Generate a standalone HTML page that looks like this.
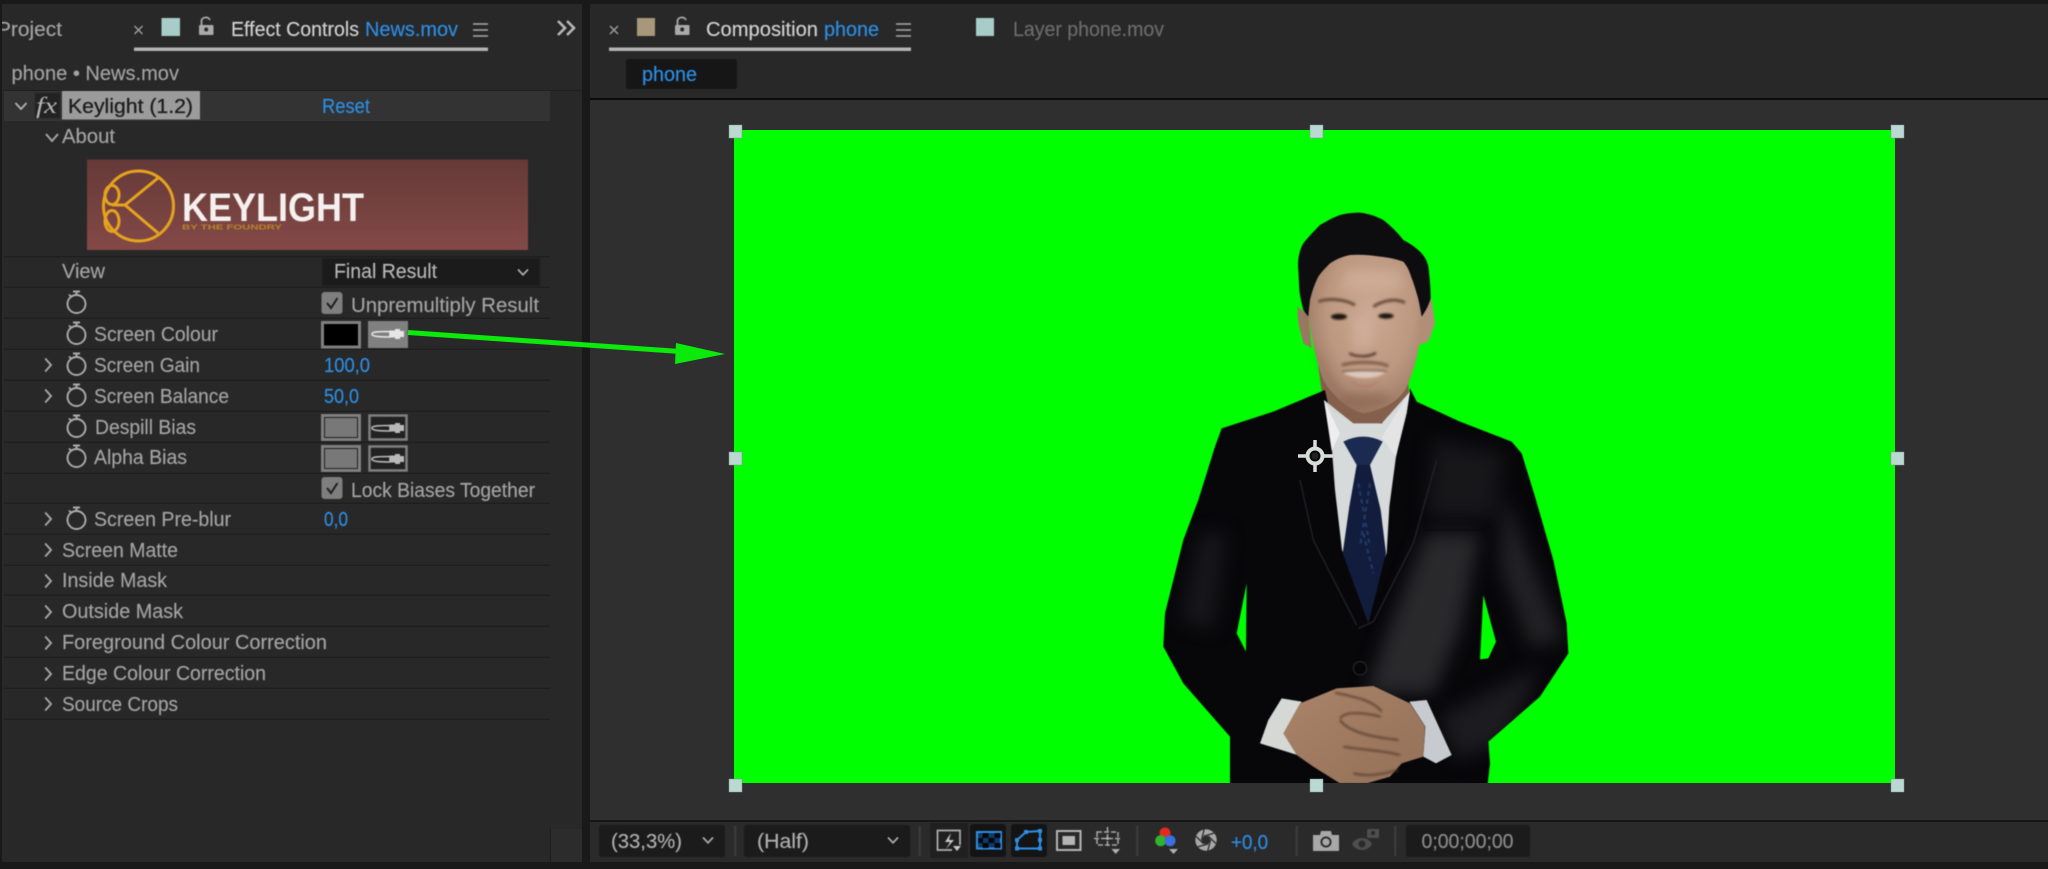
<!DOCTYPE html>
<html lang="en"><head><meta charset="utf-8"><title>Keylight - After Effects</title>
<style>
html,body{margin:0;padding:0;background:#191919;overflow:hidden}
svg{display:block;position:absolute;left:0;top:0}
text{font-family:"Liberation Sans",sans-serif;font-size:20px;fill:#a4a4a4;stroke:#a4a4a4;stroke-width:.15px}
.b{fill:#2d8fe6;stroke:#2d8fe6}.w{fill:#d2d2d2;stroke:#d2d2d2}
</style></head><body>
<svg width="2048" height="869" viewBox="0 0 2048 869" xmlns="http://www.w3.org/2000/svg">
<defs>
<filter id="s" color-interpolation-filters="sRGB" filterUnits="userSpaceOnUse" x="0" y="0" width="2048" height="869"><feGaussianBlur stdDeviation="0.4"/></filter>
<filter id="p" color-interpolation-filters="sRGB" filterUnits="userSpaceOnUse" x="1100" y="180" width="520" height="620"><feGaussianBlur stdDeviation="0.5"/></filter>
<filter id="p3" color-interpolation-filters="sRGB" x="-40%" y="-40%" width="180%" height="180%"><feGaussianBlur stdDeviation="26"/></filter>
<filter id="p1" color-interpolation-filters="sRGB" x="-30%" y="-30%" width="160%" height="160%"><feGaussianBlur stdDeviation="3"/></filter>
<filter id="p2" color-interpolation-filters="sRGB" x="-30%" y="-30%" width="160%" height="160%"><feGaussianBlur stdDeviation="14"/></filter>
<linearGradient id="logo" x1="0" y1="0" x2="0" y2="1"><stop offset="0" stop-color="#653a38"/><stop offset="1" stop-color="#844947"/></linearGradient>
<radialGradient id="face" cx=".55" cy=".42" r=".62"><stop offset="0" stop-color="#cba993"/><stop offset=".6" stop-color="#bd9880"/><stop offset="1" stop-color="#9a7763"/></radialGradient>
<linearGradient id="hand" x1="0" y1="0" x2="1" y2="1"><stop offset="0" stop-color="#ab8469"/><stop offset="1" stop-color="#937058"/></linearGradient>
<g id="sw" fill="none" stroke="#adadad" stroke-width="1.9"><circle cx="0" cy="1" r="9"/><path d="M-3.5,-11.5H3.5M0,-11.5V-8M-7.5,-8.5L-5.5,-6.5"/></g>
<path id="cr" d="M-2.8,-6.5L3,0L-2.8,6.5" fill="none" stroke="#a8a8a8" stroke-width="1.9"/>
<g id="dr"><path d="M1,5C1,3 5,2.5 19,2.5V8C5,8 1,7 1,5Z" fill="none" stroke="#e6e6e6" stroke-width="1.6"/><path d="M19,1.5H24V0H29V2H33V8H29V10H24V8.5H19Z" fill="#e6e6e6"/></g>
<g id="dr2"><path d="M1,5C1,3 5,2.5 19,2.5V8C5,8 1,7 1,5Z" fill="none" stroke="#b8b8b8" stroke-width="1.6"/><path d="M19,1.5H24V0H29V2H33V8H29V10H24V8.5H19Z" fill="#b8b8b8"/></g>
<g id="lk" fill="#a9a9a9"><rect x="0" y="8" width="14.5" height="10" rx="1"/><path d="M2.5,8V4C2.5,0 9.5,-1 11,3" fill="none" stroke="#a9a9a9" stroke-width="1.8"/><circle cx="7.2" cy="12.5" r="2" fill="#282828"/></g>
<g id="mn" stroke="#a9a9a9" stroke-width="1.6"><path d="M0,0H15M0,6H15M0,12H15"/></g>
<path id="dn" d="M-5,-2.5L0,2.8L5,-2.5" fill="none" stroke="#b0b0b0" stroke-width="1.7"/>
<clipPath id="jc"><path d="M555,570L400,635L245,685L225,740L175,900L130,1020L75,1240L70,1340L130,1450L270,1610V1750H1042L1050,1690L1045,1625L1200,1490L1285,1360L1280,1270L1240,1080L1185,890L1145,760L1115,725L960,665L830,605L810,565L800,640L640,700L570,640Z"/></clipPath>
</defs>

<rect width="2048" height="869" fill="#191919"/>
<!-- left panel -->
<rect x="2" y="4" width="580" height="858" fill="#282828"/>
<rect x="550" y="829" width="32" height="33" fill="#2c2c2c"/><rect x="550" y="829" width="1" height="33" fill="#1c1c1c"/>
<!-- right panel -->
<rect x="590" y="4" width="1458" height="858" fill="#282828"/>
<rect x="590" y="98" width="1458" height="2.5" fill="#0b0b0b"/>
<rect x="590" y="100" width="1458" height="720" fill="#2f2f2f"/>
<rect x="590" y="820" width="1458" height="2" fill="#171717"/>
<rect x="590" y="822" width="1458" height="40" fill="#2a2a2a"/>

<!-- rows -->
<rect x="4" y="90" width="578" height="1" fill="#202020"/>
<rect x="4" y="91" width="546" height="30" fill="#333333"/>
<g fill="#1f1f1f">
<rect x="4" y="256" width="546" height="1.5"/><rect x="4" y="286.5" width="546" height="1.5"/><rect x="4" y="317.5" width="546" height="1.5"/><rect x="4" y="348.5" width="546" height="1.5"/><rect x="4" y="379.5" width="546" height="1.5"/><rect x="4" y="410.5" width="546" height="1.5"/><rect x="4" y="441.5" width="546" height="1.5"/><rect x="4" y="472.5" width="546" height="1.5"/><rect x="4" y="502.5" width="546" height="1.5"/><rect x="4" y="533.5" width="546" height="1.5"/><rect x="4" y="564.5" width="546" height="1.5"/><rect x="4" y="594.5" width="546" height="1.5"/><rect x="4" y="625.5" width="546" height="1.5"/><rect x="4" y="656.5" width="546" height="1.5"/><rect x="4" y="687.5" width="546" height="1.5"/><rect x="4" y="718.5" width="546" height="1.5"/>
</g>

<g filter="url(#s)">
<!-- left tab -->
<text x="-3" y="36" textLength="65" lengthAdjust="spacingAndGlyphs">Project</text>
<path d="M134.500,26L142.500,34M142.500,26L134.500,34" stroke="#a0a0a0" stroke-width="1.4"/>
<rect x="161.500" y="18" width="18.500" height="18" fill="#a8ccc8"/>
<use href="#lk" x="199" y="17"/>
<text class="w" x="231" y="36" textLength="128" lengthAdjust="spacingAndGlyphs">Effect Controls</text>
<text class="b" x="365" y="36" textLength="93" lengthAdjust="spacingAndGlyphs">News.mov</text>
<use href="#mn" x="473" y="24"/>
<rect x="134" y="47.500" width="354" height="3.500" fill="#b4b4b4"/>
<path d="M558,21L565,28L558,35M567,21L574,28L567,35" fill="none" stroke="#b8b8b8" stroke-width="2.6"/>

<text x="11.500" y="80" textLength="167.500" lengthAdjust="spacingAndGlyphs">phone • News.mov</text>

<path d="M15.500,103L21,109L26.500,103" fill="none" stroke="#b0b0b0" stroke-width="1.9"/>
<rect x="35" y="93" width="25" height="25" fill="#222"/>
<text x="36" y="113" textLength="21" lengthAdjust="spacingAndGlyphs" style="font-family:'Liberation Serif',serif;font-style:italic;font-size:23px;fill:#b5b5b5;stroke:none">fx</text>
<rect x="62" y="91" width="138" height="28.500" fill="#9b9b9b"/>
<text x="68" y="113" textLength="125" lengthAdjust="spacingAndGlyphs" style="fill:#1c1c1c;stroke:#1c1c1c;stroke-width:.3px">Keylight (1.2)</text>
<text class="b" x="322" y="113" textLength="48" lengthAdjust="spacingAndGlyphs">Reset</text>

<path d="M46,134L52,141L58,134" fill="none" stroke="#a8a8a8" stroke-width="1.9"/>
<text x="62" y="143" textLength="53" lengthAdjust="spacingAndGlyphs">About</text>

<!-- logo -->
<rect x="87" y="159.500" width="441" height="90.500" fill="url(#logo)"/>
<g fill="none" stroke="#e5a41e" stroke-width="3">
<circle cx="138.500" cy="206" r="35"/>
<path d="M158,178L125,205L158,233M112,205H125"/>
<ellipse cx="112" cy="195" rx="7" ry="9.500"/>
<ellipse cx="112" cy="221" rx="7" ry="10.500"/>
</g>
<text x="182" y="221" textLength="182" lengthAdjust="spacingAndGlyphs" style="font-size:40px;font-weight:bold;fill:#f4f0ee;stroke:none">KEYLIGHT</text>
<text x="182" y="229.500" textLength="100" lengthAdjust="spacingAndGlyphs" style="font-size:7.500px;font-weight:bold;fill:#b8832a;stroke:none">BY THE FOUNDRY</text>

<!-- labels -->
<text x="62" y="278" textLength="43" lengthAdjust="spacingAndGlyphs">View</text>
<text x="94" y="341" textLength="124" lengthAdjust="spacingAndGlyphs">Screen Colour</text>
<text x="94" y="372" textLength="106" lengthAdjust="spacingAndGlyphs">Screen Gain</text>
<text x="94" y="403" textLength="135" lengthAdjust="spacingAndGlyphs">Screen Balance</text>
<text x="95" y="434" textLength="101" lengthAdjust="spacingAndGlyphs">Despill Bias</text>
<text x="94" y="464" textLength="93" lengthAdjust="spacingAndGlyphs">Alpha Bias</text>
<text x="94" y="526" textLength="137" lengthAdjust="spacingAndGlyphs">Screen Pre-blur</text>
<text x="62" y="557" textLength="116" lengthAdjust="spacingAndGlyphs">Screen Matte</text>
<text x="62" y="587" textLength="105" lengthAdjust="spacingAndGlyphs">Inside Mask</text>
<text x="62" y="618" textLength="121" lengthAdjust="spacingAndGlyphs">Outside Mask</text>
<text x="62" y="649" textLength="265" lengthAdjust="spacingAndGlyphs">Foreground Colour Correction</text>
<text x="62" y="680" textLength="204" lengthAdjust="spacingAndGlyphs">Edge Colour Correction</text>
<text x="62" y="711" textLength="116" lengthAdjust="spacingAndGlyphs">Source Crops</text>

<use href="#sw" x="76.500" y="303"/><use href="#sw" x="76.500" y="334"/><use href="#sw" x="76.500" y="365"/><use href="#sw" x="76.500" y="396"/><use href="#sw" x="76.500" y="427"/><use href="#sw" x="76.500" y="457"/><use href="#sw" x="76.500" y="519"/>
<use href="#cr" x="48" y="365"/><use href="#cr" x="48" y="396"/><use href="#cr" x="48" y="519"/><use href="#cr" x="48" y="550"/><use href="#cr" x="48" y="581"/><use href="#cr" x="48" y="612"/><use href="#cr" x="48" y="643"/><use href="#cr" x="48" y="674"/><use href="#cr" x="48" y="704"/>

<!-- right col -->
<rect x="322" y="258" width="218" height="28" fill="#1b1b1b" stroke="#242424"/>
<text x="334" y="278" textLength="103" lengthAdjust="spacingAndGlyphs" style="fill:#b8b8b8;stroke:#b8b8b8">Final Result</text>
<use href="#dn" x="523" y="272"/>

<rect x="321.500" y="292" width="21" height="22" rx="3" fill="#7e7e7e"/>
<path d="M327,303L331,308L337.500,298" fill="none" stroke="#1e1e1e" stroke-width="2"/>
<text x="351" y="312" textLength="188" lengthAdjust="spacingAndGlyphs">Unpremultiply Result</text>
<rect x="322.500" y="322.500" width="37" height="24.500" fill="#000" stroke="#808080" stroke-width="3"/>
<rect x="368" y="321" width="40" height="27" fill="#808080"/>
<use href="#dr" x="371" y="329"/>
<text class="b" x="324" y="372" textLength="46" lengthAdjust="spacingAndGlyphs">100,0</text>
<text class="b" x="324" y="403" textLength="35" lengthAdjust="spacingAndGlyphs">50,0</text>

<rect x="322.500" y="415.500" width="37" height="24" fill="#787878" stroke="#808080" stroke-width="3"/><rect x="324.500" y="417.500" width="33" height="20" fill="none" stroke="#222" stroke-width="1"/>
<rect x="369.500" y="415.500" width="37" height="24" fill="#222" stroke="#808080" stroke-width="2.500"/><use href="#dr2" x="371" y="423"/>
<rect x="322.500" y="446.500" width="37" height="24" fill="#787878" stroke="#808080" stroke-width="3"/><rect x="324.500" y="448.500" width="33" height="20" fill="none" stroke="#222" stroke-width="1"/>
<rect x="369.500" y="446.500" width="37" height="24" fill="#222" stroke="#808080" stroke-width="2.500"/><use href="#dr2" x="371" y="454"/>

<rect x="321.500" y="477" width="21" height="22" rx="3" fill="#7e7e7e"/>
<path d="M327,488L331,493L337.500,483" fill="none" stroke="#1e1e1e" stroke-width="2"/>
<text x="351" y="497" textLength="184" lengthAdjust="spacingAndGlyphs">Lock Biases Together</text>
<text class="b" x="324" y="526" textLength="24" lengthAdjust="spacingAndGlyphs">0,0</text>

<!-- right tabs -->
<path d="M610,26L618,34M618,26L610,34" stroke="#a0a0a0" stroke-width="1.4"/>
<rect x="637" y="18" width="18" height="18" fill="#a8977a"/>
<use href="#lk" x="675" y="17"/>
<text class="w" x="706" y="36" textLength="112" lengthAdjust="spacingAndGlyphs">Composition</text>
<text class="b" x="824" y="36" textLength="55" lengthAdjust="spacingAndGlyphs">phone</text>
<use href="#mn" x="896" y="24"/>
<rect x="609" y="47.500" width="302" height="3.500" fill="#b4b4b4"/>
<rect x="976" y="18" width="18" height="18" fill="#a8ccc8"/>
<text x="1013" y="36" textLength="151" lengthAdjust="spacingAndGlyphs" style="fill:#6c6c6c;stroke:#6c6c6c">Layer phone.mov</text>
<rect x="626" y="59" width="111" height="30" rx="3" fill="#161616"/>
<text class="b" x="642" y="81" textLength="55" lengthAdjust="spacingAndGlyphs">phone</text>

<!-- toolbar -->
<rect x="599" y="825" width="126" height="32" rx="3" fill="#1b1b1b"/>
<text x="611" y="848" textLength="71" lengthAdjust="spacingAndGlyphs" style="fill:#b0b0b0;stroke:#b0b0b0">(33,3%)</text>
<use href="#dn" x="708" y="840"/>
<rect x="744" y="825" width="166" height="32" rx="3" fill="#1b1b1b"/>
<text x="757" y="848" textLength="52" lengthAdjust="spacingAndGlyphs" style="fill:#b0b0b0;stroke:#b0b0b0">(Half)</text>
<use href="#dn" x="893" y="840"/>
<g fill="#3a3a3a"><rect x="734" y="826" width="2.500" height="30"/><rect x="918.500" y="826" width="2.500" height="30"/><rect x="1136" y="826" width="2.500" height="30"/><rect x="1295.500" y="826" width="2.500" height="30"/><rect x="1394" y="826" width="2.500" height="30"/></g>
<rect x="930" y="823" width="38" height="35" fill="#202020"/>
<path d="M952,850H937.500V830.500H960V845" fill="none" stroke="#b0b0b0" stroke-width="1.700"/>
<path d="M951,833L945,842H950L946,849L954,840H949Z" fill="#c8c8c8"/><path d="M953,846H961L957,851Z" fill="#c8c8c8"/>
<rect x="970" y="824" width="36" height="33" rx="3" fill="#141414"/>
<rect x="977" y="832" width="24" height="16.500" fill="#0f3a6a" stroke="#2d8fe6" stroke-width="2"/>
<g fill="#07070a"><rect x="982.500" y="833" width="6" height="5"/><rect x="994.500" y="833" width="6" height="5"/><rect x="978" y="838" width="5" height="5"/><rect x="988.500" y="838" width="6" height="5"/><rect x="982.500" y="843" width="6" height="5"/><rect x="994.500" y="843" width="6" height="5"/></g>
<rect x="1011" y="824" width="36" height="33" rx="3" fill="#141414"/>
<path d="M1017,848.500V840L1026,832L1040,831V848.500Z" fill="none" stroke="#2d8fe6" stroke-width="2"/>
<g fill="#2d8fe6"><rect x="1015" y="846.500" width="4" height="4"/><rect x="1038" y="846.500" width="4" height="4"/><rect x="1038" y="829" width="4" height="4"/><rect x="1024" y="830" width="4" height="4"/><rect x="1015" y="838" width="4" height="4"/><rect x="1038" y="838" width="4" height="4"/></g>
<rect x="1057" y="831" width="23.500" height="19" fill="none" stroke="#b5b5b5" stroke-width="2"/><rect x="1062.500" y="836" width="12.500" height="9" fill="#b5b5b5"/>
<path d="M1097,832H1118V845H1097ZM1107.500,827V847M1094,838.500H1121" fill="none" stroke="#a8a8a8" stroke-width="1.500" stroke-dasharray="5 2"/>
<circle cx="1107.500" cy="838.500" r="1.500" fill="#b5b5b5"/>
<path d="M1111.500,849H1120L1115.700,854Z" fill="#b0b0b0"/>
<circle cx="1165" cy="833" r="5.500" fill="#e42a1e"/><circle cx="1160.700" cy="840.700" r="5.500" fill="#2fb52a"/><circle cx="1170" cy="840.700" r="5.500" fill="#3b6fe0"/>
<path d="M1169,849H1178L1173.500,854Z" fill="#b0b0b0"/>
<g transform="translate(1206,840)">
<circle r="10.700" fill="#a8a8a8"/>
<path d="M4.500,0L1.860,10.500M2.250,3.900L-8.200,6.900M-2.250,3.900L-10.050,-3.660M-4.500,0L-1.860,-10.500M-2.250,-3.900L8.200,-6.900M2.250,-3.900L10.050,3.660" stroke="#2a2a2a" stroke-width="1.300" fill="none"/>
<path d="M4.500,0L2.250,3.900L-2.250,3.900L-4.500,0L-2.250,-3.900L2.250,-3.900Z" fill="#2a2a2a"/>
</g>
<text class="b" x="1231" y="849" textLength="37" lengthAdjust="spacingAndGlyphs">+0,0</text>
<path d="M1313,835H1320L1321,831H1331L1332,835H1339V851H1313Z" fill="#a8a8a8"/>
<circle cx="1326" cy="842" r="4.600" fill="none" stroke="#2a2a2a" stroke-width="1.900"/>
<rect x="1367" y="829" width="12" height="9" rx="1" fill="#4e4e4e"/><circle cx="1373" cy="833" r="2" fill="#2a2a2a"/>
<path d="M1352,844C1356,836 1368,836 1372,844C1368,852 1356,852 1352,844Z" fill="#4e4e4e"/><circle cx="1362" cy="844" r="3.500" fill="#2a2a2a"/>
<rect x="1406" y="825" width="124" height="32" rx="3" fill="#1b1b1b"/>
<text x="1421.500" y="848" textLength="92" lengthAdjust="spacingAndGlyphs" style="fill:#8c8c8c;stroke:#8c8c8c">0;00;00;00</text>
</g>
<rect x="0" y="4" width="2" height="858" fill="#191919"/>

<!-- composition -->
<rect x="734" y="130" width="1161" height="653" fill="#00ff00"/>
<clipPath id="cmp"><rect x="734" y="130" width="1161" height="653"/></clipPath>
<g clip-path="url(#cmp)">
<g filter="url(#p)">
<g transform="translate(1140,200) scale(.33333)">
<!-- neck -->
<path d="M535,500L550,610L640,690H725L808,590L800,500Z" fill="#84604c"/>
<!-- jacket -->
<path d="M555,570L400,635L245,685L225,740L175,900L130,1020L75,1240L70,1340L130,1450L270,1610V1760H1042L1050,1690L1045,1625L1200,1490L1285,1360L1280,1270L1240,1080L1185,890L1145,760L1115,725L960,665L830,605L810,565L800,640L640,700L570,640Z" fill="#07070a"/>
<!-- sheen -->
<g clip-path="url(#jc)">
<g filter="url(#p3)">
<path d="M740,1300L860,1000L1020,1000L960,1290L880,1480L680,1480Z" fill="#29292c"/>
<path d="M1090,880L1180,1100L1270,1320L1170,1340L1080,1100Z" fill="#222225"/>
<path d="M180,1000L120,1260L220,1290L260,1000Z" fill="#17171a"/>
<path d="M900,1550L1200,1400L1100,1620L950,1680Z" fill="#1c1c20"/>
<path d="M880,720L1090,760L1060,950L860,950Z" fill="#17171a"/>
</g>
</g>
<!-- armhole greens -->
<path d="M320,1150L290,1300L318,1355Z" fill="#00ff00"/>
<path d="M1030,1185L1068,1325L1045,1375L1020,1378Z" fill="#00ff00"/>
<!-- shirt -->
<path d="M552,600L640,670L725,670L810,575L800,640L768,770L748,920L740,1060L675,1200L606,1050L585,870L576,750Z" fill="#d6dada"/>
<path d="M552,600L600,700L575,752Z" fill="#eeeeee"/>
<path d="M810,575L725,712L768,770Z" fill="#e4e4e4"/>
<!-- tie -->
<path d="M610,725C650,705 690,705 728,725L690,795H650Z" fill="#1a2a50"/>
<path d="M650,795H690L722,930L738,1060L685,1270L608,1060L628,920Z" fill="#121c3c"/>
<path d="M655,850L690,1040M690,850L660,1040M670,1000L700,1120" stroke="#2b4783" stroke-width="7" fill="none" stroke-dasharray="14 10" opacity=".6"/>
<!-- lapel lines -->
<path d="M480,840L520,1020L650,1275M890,780L820,1030L700,1265L655,1285" fill="none" stroke="#232327" stroke-width="4"/>
<path d="M850,990H1030" stroke="#0a0a0c" stroke-width="4"/>
<circle cx="660" cy="1405" r="20" fill="#060607" stroke="#2a2a2c" stroke-width="3"/>
<!-- cuffs -->
<path d="M425,1495L485,1505L432,1600L472,1665L360,1630L385,1560Z" fill="#d5d8d4"/>
<path d="M808,1505L860,1500L935,1665L888,1690L850,1670L856,1580Z" fill="#c7cbd0"/>
<!-- hands -->
<path d="M430,1600L480,1510L590,1465L700,1458L810,1510L855,1580L850,1670L785,1690L750,1730L680,1750H600L520,1700L470,1665Z" fill="url(#hand)"/>
<g fill="none" stroke="#553829" stroke-width="5" filter="url(#p1)">
<path d="M585,1478C640,1490 700,1500 725,1535M600,1555C620,1530 680,1540 722,1550M600,1560C620,1590 680,1610 775,1620M610,1640C670,1650 720,1650 780,1665M640,1720C680,1730 720,1725 775,1710"/>
</g>
<!-- ears -->
<path d="M472,320L505,345L515,445L490,430L475,370Z" fill="#9a7762"/>
<path d="M875,295L885,370L865,425L835,435L840,345Z" fill="#b08e78"/>
<!-- face -->
<path d="M505,345C480,200 570,110 680,110C800,110 865,260 845,350C845,420 830,490 805,550C790,590 750,625 670,640C620,625 580,590 550,540C530,490 515,420 505,345Z" fill="url(#face)"/>
<!-- hair -->
<path d="M475,210C472,180 478,150 490,130C510,105 535,80 540,75C565,60 585,50 600,45C620,40 640,38 660,38C690,42 710,50 730,60C755,80 775,100 790,120C810,130 830,145 840,155C855,170 862,185 865,200C870,240 872,270 872,295C865,320 855,335 845,350C840,320 835,295 830,280C822,250 815,235 810,220C805,205 798,195 790,185C760,175 740,172 720,170C690,165 660,163 630,165C605,170 585,180 570,190C555,205 545,215 535,230C520,260 515,280 510,300C508,320 506,335 505,350C498,342 494,336 490,330C485,310 480,290 478,270Z" fill="#0d0d0f"/>
<!-- face shading -->
<g filter="url(#p2)">
<path d="M640,350L690,350L700,440L640,450Z" fill="#d8b8a3" opacity=".5"/>
<path d="M525,440C560,520 600,600 670,635C620,620 560,570 525,440Z" fill="#775644" opacity=".7"/>
<path d="M620,210H780L790,270H600Z" fill="#d5b5a0" opacity=".5"/>
<path d="M590,610C630,640 710,640 760,600L730,580L620,580Z" fill="#8a6651" opacity=".7"/>
</g>
<!-- features -->
<g filter="url(#p1)">
<g fill="none" stroke="#6b4c3c" stroke-width="9"><path d="M535,305C560,295 610,295 645,315M700,320C730,300 765,295 795,308"/></g>
<ellipse cx="597" cy="350" rx="24" ry="9" fill="#1c1310"/>
<ellipse cx="738" cy="348" rx="23" ry="8" fill="#1c1310"/>
<path d="M628,460C650,472 690,472 708,458" fill="none" stroke="#5f4233" stroke-width="8"/>
<path d="M605,495C640,485 710,483 745,498" stroke="#836350" stroke-width="10" fill="none"/>
<path d="M608,517C640,512 700,512 738,516C710,540 640,540 608,517Z" fill="#dcc9bd"/>
<path d="M606,515C640,510 705,510 740,514" stroke="#5a3c30" stroke-width="3" fill="none"/>
<path d="M628,538C660,565 700,560 725,532C700,572 650,572 628,538Z" fill="#b07e6e"/>
</g>
</g>
</g>
</g>
<!-- anchor point -->
<g transform="translate(1315,456)" fill="none" stroke="#d7ddd9">
<circle r="7.500" stroke-width="4"/>
<path d="M0,-16V-6M0,6V16M-17,0H-7M7,0H18" stroke-width="3.500"/>
</g>
<circle cx="1315" cy="456" r="3.500" fill="#222"/>
<!-- handles -->
<g fill="#bcd8d2" stroke="#7c9a92" stroke-width=".5">
<rect x="729" y="125" width="13" height="13"/><rect x="1310" y="125" width="13" height="13"/><rect x="1891" y="125" width="13" height="13"/>
<rect x="729" y="452" width="13" height="13"/><rect x="1891" y="452" width="13" height="13"/>
<rect x="729" y="779" width="13" height="13"/><rect x="1310" y="779" width="13" height="13"/><rect x="1891" y="779" width="13" height="13"/>
</g>
<!-- arrow -->
<path d="M408,332.500L680,351.500" stroke="#0bea0b" stroke-width="5"/>
<path d="M725,354L676,343L675,364Z" fill="#0bea0b"/>
</svg>
</body></html>
